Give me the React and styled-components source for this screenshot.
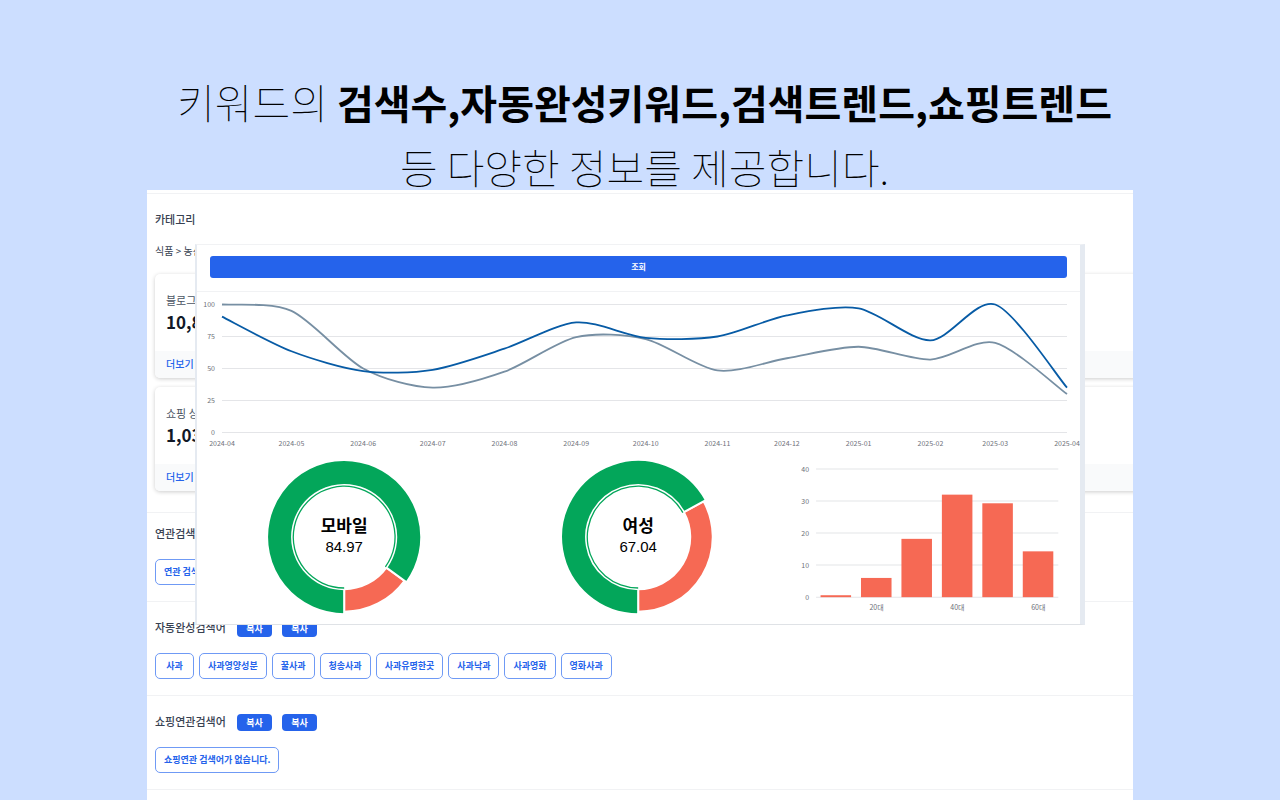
import React from "react";
import styled, { createGlobalStyle } from "styled-components";

const GlobalStyle = createGlobalStyle`
    * {
        box-sizing: border-box;
    }

    body {
        margin: 0;
        background: #ccdeff;
        font-family: "Noto Sans CJK KR", sans-serif;
    }
`;

const Page = styled.div`
    display: flex;
    flex-direction: column;
    min-height: 100vh;
`;

const Headline = styled.h1`
    margin: 0;
    padding: 69px 0 0 9px;
    height: 190px;
    font-size: 41px;
    line-height: 64px;
    font-weight: 100;
    text-align: center;
    color: #000;
`;

const HeadlineStrong = styled.strong`
    font-size: 40px;
    font-weight: 700;
`;

const Panel = styled.main`
    position: relative;
    flex: 1;
    margin: 0 147px;
    padding-top: 3px;
    background: #fff;
`;

const Clip = styled.div`
    overflow: hidden;
`;

const Section = styled.section`
    padding: ${(props) => (props.$compact ? "12px" : "17px")} 8px 16px;
    border-top: 1px solid #f1f2f4;
`;

const SectionHead = styled.div`
    display: flex;
    align-items: flex-start;
    gap: 10px;
    height: 18px;
`;

const SectionTitle = styled.h2`
    min-width: 72px;
    margin: 0;
    font-size: 11px;
    line-height: 16px;
    font-weight: 500;
    color: #374151;
`;

const CopyButton = styled.button`
    width: 35px;
    height: 17px;
    margin-top: 1px;
    padding: 0;
    border: 0;
    border-radius: 4px;
    background: #2563eb;
    color: #fff;
    font-family: inherit;
    font-size: 9px;
    line-height: 17px;
    font-weight: 700;
`;

const ChipList = styled.div`
    display: flex;
    flex-wrap: wrap;
    gap: 5px;
    margin-top: 16px;
`;

const Chip = styled.button`
    min-width: 39px;
    height: 26px;
    padding: 0 8px;
    border: 1px solid #6f9af5;
    border-radius: 5px;
    background: #fff;
    color: #2563eb;
    font-family: inherit;
    font-size: 9px;
    line-height: 24px;
    font-weight: 700;
    white-space: nowrap;
`;

const CategoryPath = styled.p`
    margin: 14px 0 0;
    font-size: 10px;
    line-height: 16px;
    color: #374151;
`;

const CardGrid = styled.div`
    display: grid;
    gap: 9px;
    margin: 15px -24px 5px 0;
`;

const Card = styled.article`
    border-radius: 5px;
    background: #fff;
    box-shadow: 0 1px 4px rgba(0, 0, 0, 0.2);
    overflow: hidden;
`;

const CardBody = styled.div`
    padding: 17px 11px;
    height: 77px;
`;

const CardLabel = styled.div`
    font-size: 11px;
    line-height: 18px;
    color: #4b5563;
`;

const CardValue = styled.div`
    font-size: 17px;
    line-height: 26px;
    font-weight: 700;
    color: #111827;
`;

const CardFooter = styled.div`
    height: 27px;
    padding: 0 11px;
    background: #f9fafb;
`;

const MoreLink = styled.a`
    display: block;
    font-size: 10px;
    line-height: 25px;
    font-weight: 500;
    color: #2563eb;
    text-decoration: none;
`;

const Popover = styled.div`
    position: absolute;
    top: 54px;
    left: 48px;
    right: 48px;
    border: solid #e5eaf1;
    border-width: 1px 5px 1px 2px;
    border-top-color: #f1f2f4;
    border-bottom-color: #dfe2e6;
    background: #fff;
`;

const Toolbar = styled.div`
    padding: 11px 13px 13px;
    border-bottom: 1px solid #f1f2f4;
`;

const SearchButton = styled.button`
    display: block;
    width: 100%;
    height: 22px;
    padding: 0;
    border: 0;
    border-radius: 3px;
    background: #2563eb;
    color: #fff;
    font-family: inherit;
    font-size: 8px;
    line-height: 22px;
    font-weight: 700;
`;

const ChartRow = styled.div`
    display: grid;
    grid-template-columns: repeat(3, 1fr);
`;

const Chart = styled.svg`
    display: block;
    width: 100%;
`;

const AxisText = styled.text`
    font-family: "Noto Sans CJK KR", sans-serif;
    font-size: 7px;
    fill: #6e7079;
    text-anchor: ${(props) => props.$anchor || "middle"};
`;

const DonutTitle = styled.text`
    font-size: 17px;
    font-weight: 700;
    text-anchor: middle;
`;

const DonutValue = styled.text`
    font-family: "Liberation Sans", Arial, sans-serif;
    font-size: 15px;
    text-anchor: middle;
`;

// day = days since the first month of the range
const months = [
    { label: "2024-04", day: 0, blue: 90.5, gray: 100 },
    { label: "2024-05", day: 30, blue: 63.5, gray: 95 },
    { label: "2024-06", day: 61, blue: 48, gray: 50 },
    { label: "2024-07", day: 91, blue: 49, gray: 35 },
    { label: "2024-08", day: 122, blue: 65.5, gray: 47.5 },
    { label: "2024-09", day: 153, blue: 86, gray: 74.5 },
    { label: "2024-10", day: 183, blue: 74, gray: 73 },
    { label: "2024-11", day: 214, blue: 75, gray: 48.5 },
    { label: "2024-12", day: 244, blue: 91.5, gray: 58 },
    { label: "2025-01", day: 275, blue: 97, gray: 67 },
    { label: "2025-02", day: 306, blue: 72, gray: 57 },
    { label: "2025-03", day: 334, blue: 100, gray: 70 },
    { label: "2025-04", day: 365, blue: 35, gray: 30 },
];

const ages = [
    { label: "", value: 0.6 },
    { label: "20대", value: 6 },
    { label: "", value: 18.2 },
    { label: "40대", value: 32 },
    { label: "", value: 29.3 },
    { label: "60대", value: 14.3 },
];

const autoKeywords = [
    "사과", "사과영양성분", "꿀사과", "청송사과",
    "사과유명한곳", "사과낙과", "사과영화", "영화사과",
];

const SMOOTH = 0.14;

const lineX = (day) => 25 + (day / 365) * 845;
const lineY = (value) => 140.5 - value * 1.28;

const splinePath = (key) => {
    const pts = months.map((m) => [lineX(m.day), lineY(m[key])]);
    let d = `M${pts[0]}`;
    for (let i = 0; i < pts.length - 1; i++) {
        const a = pts[i - 1] || pts[i];
        const b = pts[i];
        const c = pts[i + 1];
        const e = pts[i + 2] || c;
        d += `C${b[0] + (c[0] - a[0]) * SMOOTH},${b[1] + (c[1] - a[1]) * SMOOTH}`;
        d += ` ${c[0] - (e[0] - b[0]) * SMOOTH},${c[1] - (e[1] - b[1]) * SMOOTH} ${c}`;
    }
    return d;
};

const CX = 147;
const CY = 81;

const point = (r, deg) => {
    const rad = (deg * Math.PI) / 180;
    return [CX + r * Math.sin(rad), CY - r * Math.cos(rad)];
};

const ringPath = (inner, outer, from, to) => {
    const large = to - from > 180 ? 1 : 0;
    return `M${point(outer, from)}A${outer},${outer} 0 ${large} 1 ${point(outer, to)}` +
        `L${point(inner, to)}A${inner},${inner} 0 ${large} 0 ${point(inner, from)}Z`;
};

const TrendChart = () => (
    <Chart viewBox="0 0 883 164" role="img" aria-label="검색 트렌드">
        {[0, 25, 50, 75, 100].map((v) => (
            <g key={v}>
                <line x1="25" x2="870" y1={lineY(v)} y2={lineY(v)} stroke="#e4e5e8" />
                <AxisText x="18" y={lineY(v) + 2.5} $anchor="end">{v}</AxisText>
            </g>
        ))}
        {months.map((m) => (
            <AxisText key={m.label} x={lineX(m.day)} y="154">{m.label}</AxisText>
        ))}
        <path d={splinePath("gray")} fill="none" stroke="#778fa3" strokeWidth="1.8" />
        <path d={splinePath("blue")} fill="none" stroke="#075ba5" strokeWidth="1.8" />
    </Chart>
);

const Donut = ({ title, value }) => {
    const end = 180 + value * 3.6;
    return (
        <Chart viewBox="0 0 294 168" role="img" aria-label={title}>
            <path d={ringPath(52, 74.5, end, 540)} fill="#f66954" stroke="#fff" strokeWidth="2" />
            <path d={ringPath(52, 77, 180, end)} fill="#03a65a" stroke="#fff" strokeWidth="2" />
            <path d={ringPath(50.2, 51.5, 180, end)} fill="#03a65a" />
            <DonutTitle x={CX} y="76">{title}</DonutTitle>
            <DonutValue x={CX} y="96">{value}</DonutValue>
        </Chart>
    );
};

const AgeChart = () => (
    <Chart viewBox="0 0 294 168" role="img" aria-label="연령">
        {[0, 10, 20, 30, 40].map((v) => (
            <g key={v}>
                <line x1="30" x2="272" y1={141 - v * 3.2} y2={141 - v * 3.2} stroke="#e4e5e8" />
                <AxisText x="23" y={143.5 - v * 3.2} $anchor="end">{v}</AxisText>
            </g>
        ))}
        {ages.map((age, i) => (
            <g key={i}>
                <rect x={34.5 + i * 40.4} y={141 - age.value * 3.2} width="30.5" height={age.value * 3.2} fill="#f66954" />
                {age.label && <AxisText x={50 + i * 40.4} y="154">{age.label}</AxisText>}
            </g>
        ))}
    </Chart>
);

const StatCard = ({ label, value }) => (
    <Card>
        <CardBody>
            <CardLabel>{label}</CardLabel>
            <CardValue>{value}</CardValue>
        </CardBody>
        <CardFooter>
            <MoreLink href="#more">더보기</MoreLink>
        </CardFooter>
    </Card>
);

const KeywordSection = ({ title, keywords, copy }) => (
    <Section $compact={!copy}>
        <SectionHead>
            <SectionTitle>{title}</SectionTitle>
            {copy && <CopyButton>복사</CopyButton>}
            {copy && <CopyButton>복사</CopyButton>}
        </SectionHead>
        <ChipList>
            {keywords.map((word) => (
                <Chip key={word}>{word}</Chip>
            ))}
        </ChipList>
    </Section>
);

const App = () => (
    <>
        <GlobalStyle />
        <Page>
            <Headline>
                키워드의 <HeadlineStrong>검색수,자동완성키워드,검색트렌드,쇼핑트렌드</HeadlineStrong>
                <br />
                등 다양한 정보를 제공합니다.
            </Headline>
            <Panel>
                <Clip>
                    <Section>
                        <SectionHead>
                            <SectionTitle>카테고리</SectionTitle>
                        </SectionHead>
                        <CategoryPath>식품 &gt; 농산</CategoryPath>
                        <CardGrid>
                            <StatCard label="블로그" value="10,8" />
                            <StatCard label="쇼핑 상" value="1,03" />
                        </CardGrid>
                    </Section>
                    <KeywordSection title="연관검색" keywords={["연관 검색"]} />
                    <KeywordSection title="자동완성검색어" keywords={autoKeywords} copy />
                    <KeywordSection title="쇼핑연관검색어" keywords={["쇼핑연관 검색어가 없습니다."]} copy />
                    <Section />
                </Clip>
                <Popover>
                    <Toolbar>
                        <SearchButton>조회</SearchButton>
                    </Toolbar>
                    <TrendChart />
                    <ChartRow>
                        <Donut title="모바일" value={84.97} />
                        <Donut title="여성" value={67.04} />
                        <AgeChart />
                    </ChartRow>
                </Popover>
            </Panel>
        </Page>
    </>
);

export default App;
